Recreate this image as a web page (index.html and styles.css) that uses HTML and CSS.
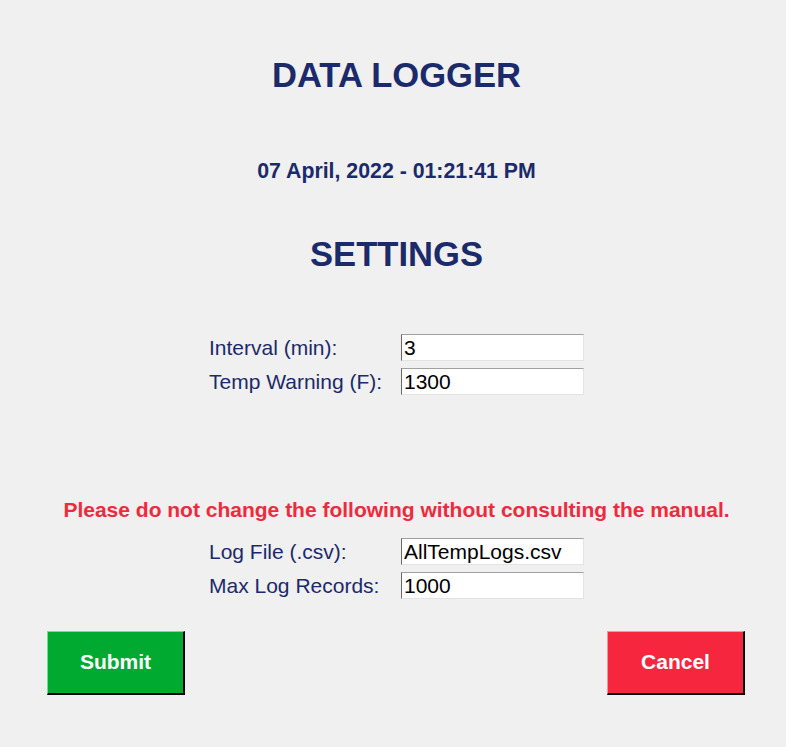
FILE: index.html
```html
<!DOCTYPE html>
<html>
<head>
<meta charset="utf-8">
<title>Data Logger</title>
<link rel="stylesheet" href="styles.css">
</head>
<body>
<main class="app">
  <h1 class="title">DATA LOGGER</h1>
  <div class="datetime">07 April, 2022 - 01:21:41 PM</div>
  <h2 class="section">SETTINGS</h2>
  <div class="form-grid grid-top">
    <label class="label">Interval (min):</label>
    <input class="field" type="text" value="3">
    <label class="label">Temp Warning (F):</label>
    <input class="field" type="text" value="1300">
  </div>
  <div class="warning">Please do not change the following without consulting the manual.</div>
  <div class="form-grid grid-bottom">
    <label class="label">Log File (.csv):</label>
    <input class="field" type="text" value="AllTempLogs.csv">
    <label class="label">Max Log Records:</label>
    <input class="field" type="text" value="1000">
  </div>
  <div class="actions">
    <button class="btn btn-submit">Submit</button>
    <button class="btn btn-cancel">Cancel</button>
  </div>
</main>
</body>
</html>
```
FILE: styles.css
```css
html, body {
  margin: 0;
  padding: 0;
  background: #f0f0f0;
}
body {
  width: 786px;
  height: 747px;
  overflow: hidden;
  font-family: "Liberation Sans", Arial, sans-serif;
}
.app {
  display: flex;
  flex-direction: column;
  align-items: center;
  padding-left: 7px;
  padding-top: 55px;
  box-sizing: border-box;
  width: 786px;
}
.title, .section {
  margin: 0;
  font-size: 34.6px;
  line-height: 40px;
  font-weight: bold;
  color: #1b2a6b;
}
.datetime {
  margin-top: 64px;
  font-size: 21.3px;
  line-height: 24px;
  font-weight: bold;
  color: #1b2a6b;
}
.section {
  margin-top: 51px;
}
.form-grid {
  display: grid;
  grid-template-columns: 192px 183px;
  grid-auto-rows: 27px;
  row-gap: 7px;
  align-items: center;
}
.grid-top {
  margin-top: 60px;
}
.grid-bottom {
  margin-top: 16px;
}
.label {
  font-size: 21px;
  line-height: 25px;
  color: #1b2a6b;
  white-space: nowrap;
}
.field {
  box-sizing: border-box;
  width: 183px;
  height: 27px;
  margin: 0;
  padding: 0 0 0 2px;
  font-family: "Liberation Sans", Arial, sans-serif;
  font-size: 21px;
  line-height: 25px;
  color: #000;
  background: #fff;
  border-style: solid;
  border-width: 1px;
  border-color: #a0a0a0 #e3e3e3 #e3e3e3 #696969;
  outline: none;
}
.warning {
  margin-top: 103px;
  font-size: 21px;
  line-height: 24px;
  font-weight: bold;
  color: #ef2a3d;
  white-space: nowrap;
}
.actions {
  align-self: stretch;
  display: flex;
  justify-content: space-between;
  margin-top: 32px;
  padding: 0 41px 0 40px;
}
.btn {
  box-sizing: border-box;
  width: 138px;
  height: 64px;
  margin: 0;
  padding: 0 0 1px 0;
  font-family: "Liberation Sans", Arial, sans-serif;
  font-size: 21px;
  font-weight: bold;
  color: #fff;
  border-style: solid;
  border-width: 1px 2px 2px 1px;
  cursor: pointer;
}
.btn-submit {
  background: #00aa30;
  border-color: #7fd797 #000 #000 #7fd797;
}
.btn-cancel {
  background: #f6263f;
  border-color: #fa929f #000 #000 #fa929f;
}
```
